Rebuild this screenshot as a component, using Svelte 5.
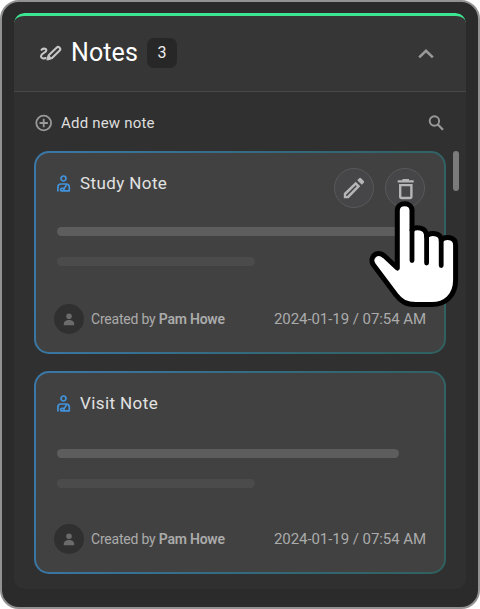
<script>
  const notes = [
    { title: 'Study Note', author: 'Pam Howe', date: '2024-01-19 / 07:54 AM', active: true },
    { title: 'Visit Note', author: 'Pam Howe', date: '2024-01-19 / 07:54 AM', active: false }
  ];
</script>

<div class="frame">
  <section class="panel">
    <header>
      <svg class="sign" width="24" height="18" viewBox="0 0 24 18" fill="none" stroke="#c6c6c6" stroke-width="2.1" stroke-linecap="round" stroke-linejoin="round">
        <path d="M2.6 4.8C4.2 3.2 7.2 3.1 7.4 5.2C7.6 7.9 2 8 2 11.2C2 13.7 4.6 13.8 6.6 13" />
        <path d="M10 9.9L17.8 2.4Q19 1.3 20.4 2.6Q22 4.1 20.7 5.5L13 13.1L9.2 14.2Z" />
        <path d="M9.4 10.5L12.7 13.2L8.2 14.9Z" fill="#c6c6c6" stroke-width="1" />
      </svg>
      <h1>Notes</h1>
      <span class="count">3</span>
      <svg class="chevron" width="16" height="10" viewBox="0 0 16 10" fill="none" stroke="#999" stroke-width="2.6"><path d="M1.2 8.4L8 1.8L14.8 8.4" /></svg>
    </header>

    <div class="toolbar">
      <svg width="18" height="18" viewBox="0 0 18 18" fill="none" stroke="#999" stroke-width="1.8"><circle cx="8.7" cy="9" r="7.4" /><path d="M8.7 4.8V13.2M4.5 9H12.9" /></svg>
      <span>Add new note</span>
      <svg class="search" width="16" height="16" viewBox="0 0 16 16" fill="none" stroke="#999"><circle cx="6.4" cy="6" r="4.7" stroke-width="1.9" /><path d="M9.6 9.3L15 14.7" stroke-width="2.3" /></svg>
    </div>

    <div class="list">
      {#each notes as note}
        <article>
          <div class="title">
            <svg width="15" height="18" viewBox="0 0 15 18" fill="none" stroke="#4293dc" stroke-width="1.7" stroke-linejoin="round">
              <circle cx="7.5" cy="3.5" r="2.5" />
              <path d="M1.9 16.6V12.2Q1.9 9 5 9H10.2Q13.3 9 13.3 12.2V15.8H5.7Q4.5 15.8 4.5 14.7T5.7 13.4H8.3L10.6 9.6M8.3 13.4L7.6 15.6" />
            </svg>
            <h2>{note.title}</h2>
          </div>
          <div class="line long" class:first={note.active}></div>
          <div class="line short" class:first={note.active}></div>
          <footer>
            <span class="avatar">
              <svg width="12" height="13" viewBox="0 0 12 13" fill="#6b6b6b"><circle cx="6" cy="3.2" r="2.8" /><path d="M.8 12.2V10.8C.8 8.4 3.3 7 6 7S11.2 8.4 11.2 10.8V12.2Z" /></svg>
            </span>
            <span class="by">Created by <b>{note.author}</b></span>
            <time>{note.date}</time>
          </footer>
          {#if note.active}
            <div class="actions">
              <button aria-label="Edit note">
                <svg width="24" height="24" viewBox="0 0 24 24" fill="#b5b5b5"><path fill-rule="evenodd" d="M1.8 17.3V22.2H6.6L18.3 10.3L13.7 5.7ZM4.1 19.9V18.8L13.7 9.2L14.8 10.3L5.2 19.9ZM15.2 4.2L17.2 2.2Q18.1 1.3 19 2.2L21.8 5Q22.7 5.9 21.8 6.8L19.8 8.8Z" /></svg>
              </button>
              <button aria-label="Delete note">
                <svg width="24" height="24" viewBox="0 0 24 24" fill="none" stroke="#b5b5b5" stroke-width="2.4"><path d="M4.7 5.4H20.7M9.4 4.3H16" /><path d="M7.2 9.1H18.4V20.6Q18.4 22 17 22H8.6Q7.2 22 7.2 20.6Z" /></svg>
              </button>
            </div>
          {/if}
        </article>
      {/each}
    </div>
    <div class="scroll"></div>
  </section>

  <svg class="hand" width="92" height="110" viewBox="368 199 92 110" fill="#fff" stroke="#000" stroke-width="5" stroke-linecap="round" stroke-linejoin="round">
    <path d="M397.3 268V210.5C397.3 201.5 412 201.5 412 210.5V230C415 226.5 426.6 226.5 426.6 236C430 232 441.2 232.5 441.2 240C445 236 455.6 236.5 455.6 245V280C455.6 296 445 304.6 432 304.6H416C406 304.6 401 301.5 396 295L373.5 265C368.3 257.5 377 249.5 384.5 256Z" />
    <path d="M412 230V260.5M426.6 236V263M441.2 240V265.5" stroke-width="4.8" />
  </svg>
</div>

<style>
  :global(body) { background: #fff; }
  :global(#app) { font-family: Roboto, sans-serif; }
  * { box-sizing: border-box; }
  h1, h2 { margin: 0; font-weight: 400; }
  svg { display: block; flex: none; }
  .frame {
    position: relative; width: 480px; height: 609px; padding: 11px 12px;
    border: 2px solid #929292; border-radius: 19px; background: #2b2b2b;
  }
  .panel {
    position: relative; width: 452px; height: 576px; border-radius: 10px;
    background: #303030; overflow: hidden;
  }
  header {
    height: 79px; display: flex; align-items: center; padding: 0 32px 0 25px;
    border-top: 3px solid #3de690; border-radius: 10px 10px 0 0;
    border-bottom: 1px solid #484848; background: #363636;
  }
  h1 { margin: -1px 0 0 8px; color: #fff; font-size: 25px; line-height: 30px; letter-spacing: .1px; width: 67px; }
  .count {
    width: 30px; height: 30px; margin: -2px 0 0 9px; border-radius: 7px; background: #272727;
    color: #eee; font-size: 16px; line-height: 30px; text-align: center;
  }
  .chevron { margin: 0 0 0 auto; }
  .toolbar { display: flex; align-items: center; height: 60px; padding: 2px 22px 0 21px; color: #dedede; font-size: 15px; letter-spacing: .2px; }
  .toolbar span { margin-left: 8px; }
  .search { margin-left: auto; }
  .list { display: flex; flex-direction: column; gap: 17px; padding-left: 20px; margin-top: -1px; }
  article {
    position: relative; width: 412px; height: 203px; padding: 19px 18px 0 17px;
    border: 2px solid transparent; border-radius: 15px;
    background: linear-gradient(#414141, #414141) padding-box, linear-gradient(100deg, #3a78a9, #32656f 75%, #30605f) border-box;
  }
  .title { display: flex; align-items: center; height: 24px; padding-left: 3px; }
  h2 { margin: -2px 0 0 9px; color: #e2e2e2; font-size: 17px; line-height: 24px; letter-spacing: .4px; }
  .line { height: 9px; margin-left: 4px; border-radius: 5px; }
  .long { width: 342px; margin-top: 33px; background: #5d5d5d; }
  .long.first { margin-top: 31px; }
  .short { width: 198px; margin-top: 21px; background: #4b4b4b; }
  footer { position: relative; display: flex; align-items: center; height: 30px; margin-top: 36px; color: #ababab; }
  .short.first + footer { margin-top: 38px; }
  .avatar { display: grid; place-items: center; width: 30px; height: 30px; margin-left: 1px; border-radius: 50%; background: #303030; }
  .by { margin-left: 7px; font-size: 14px; letter-spacing: -.21px; }
  b { font-weight: 600; }
  time { margin-left: auto; font-size: 15px; letter-spacing: -.06px; }
  .actions { position: absolute; right: 19px; top: 15px; display: flex; gap: 11px; }
  button { display: grid; place-items: center; width: 40px; height: 40px; padding: 0; border: 1px solid #59585b; border-radius: 50%; background: #464548; }
  .scroll { position: absolute; right: 7px; top: 138px; width: 6px; height: 40px; border-radius: 3px; background: #7b7b7b; }
  .hand { position: absolute; left: 366px; top: 197px; }
</style>
